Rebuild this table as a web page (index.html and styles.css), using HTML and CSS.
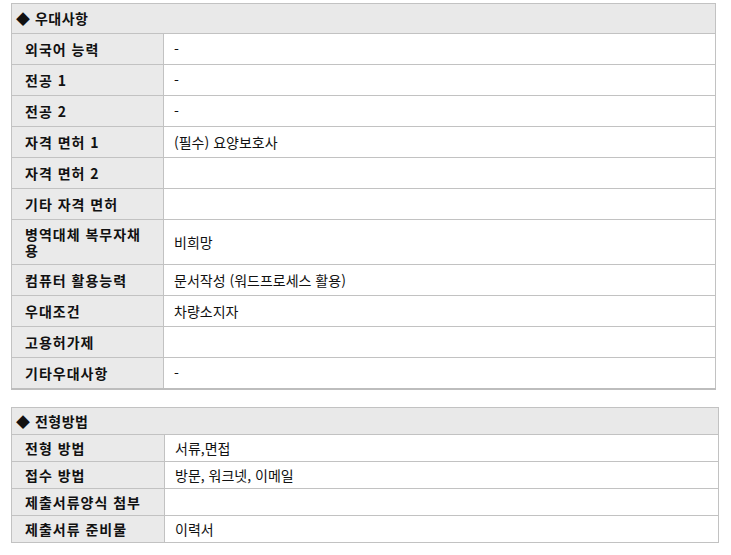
FILE: index.html
```html
<!DOCTYPE html>
<html lang="ko">
<head>
<meta charset="utf-8">
<link rel="stylesheet" href="styles.css">
</head>
<body>
<div class="page">
  <table class="info info-lg">
    <colgroup><col class="c-label"><col></colgroup>
    <tr><th colspan="2" class="sec">◆ 우대사항</th></tr>
    <tr><th>외국어 능력</th><td>-</td></tr>
    <tr><th>전공 1</th><td>-</td></tr>
    <tr><th>전공 2</th><td>-</td></tr>
    <tr><th>자격 면허 1</th><td>(필수) 요양보호사</td></tr>
    <tr><th>자격 면허 2</th><td></td></tr>
    <tr><th>기타 자격 면허</th><td></td></tr>
    <tr class="tall"><th>병역대체 복무자채용</th><td>비희망</td></tr>
    <tr><th>컴퓨터 활용능력</th><td>문서작성 (워드프로세스 활용)</td></tr>
    <tr><th>우대조건</th><td>차량소지자</td></tr>
    <tr><th>고용허가제</th><td></td></tr>
    <tr><th>기타우대사항</th><td>-</td></tr>
  </table>

  <table class="info info-sm">
    <colgroup><col class="c-label2"><col></colgroup>
    <tr><th colspan="2" class="sec">◆ 전형방법</th></tr>
    <tr><th>전형 방법</th><td>서류,면접</td></tr>
    <tr><th>접수 방법</th><td>방문, 워크넷, 이메일</td></tr>
    <tr><th>제출서류양식 첨부</th><td></td></tr>
    <tr><th>제출서류 준비물</th><td>이력서</td></tr>
  </table>
</div>
</body>
</html>
```

FILE: styles.css
```css
html, body {
  margin: 0;
  padding: 0;
  background: #fff;
}
.page {
  padding: 3px 0 0 11px;
  font-family: "Noto Sans CJK KR", "Noto Sans", sans-serif;
  font-size: 14px;
  color: #111;
}
.info {
  border-collapse: collapse;
  table-layout: fixed;
  border: 1px solid #c2c2c2;
}
.c-label { width: 152px; }
.c-label2 { width: 153px; }
.info-lg {
  width: 705px;
  border-bottom: 2px solid #bdbdbd;
}
.info-sm {
  width: 708px;
  margin-top: 17px;
}
.info th,
.info td {
  border: 1px solid #c2c2c2;
  text-align: left;
  vertical-align: middle;
  line-height: 16px;
}
.info th {
  padding: 7px 17px 7px 13px;
  background: #eaeaea;
  font-weight: bold;
  letter-spacing: 1px;
}
.info td {
  padding: 7px 10px;
  background: #fff;
  font-weight: normal;
}
.info .tall th {
  padding-top: 6px;
  padding-bottom: 6px;
  line-height: 16px;
}
.info .tall td {
  padding-top: 6px;
  padding-bottom: 6px;
}
.info th.sec {
  padding: 6px 4px 7px 4px;
  background: #e9e9e9;
  letter-spacing: 0.5px;
}
.info-sm th,
.info-sm td {
  padding-top: 5px;
  padding-bottom: 5px;
}
.info-sm th.sec {
  padding-top: 5px;
  padding-bottom: 5px;
}
```
